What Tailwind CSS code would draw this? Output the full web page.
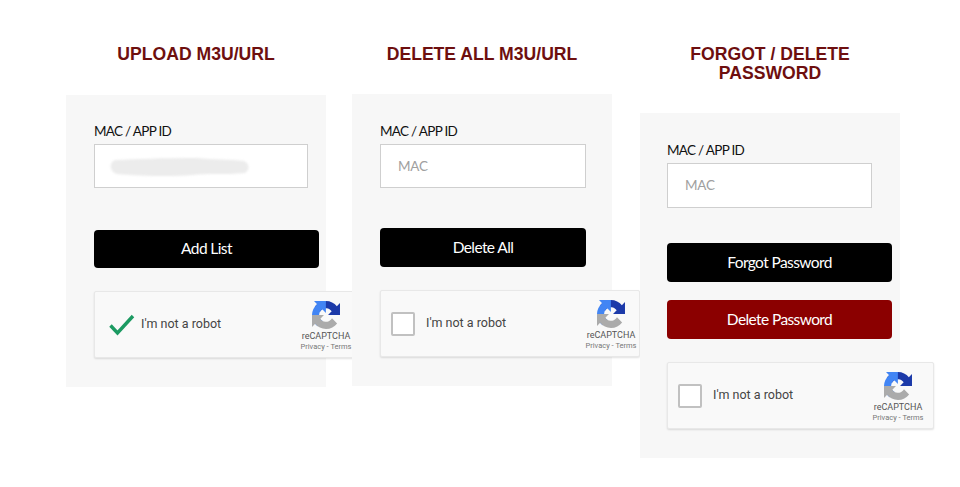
<!DOCTYPE html>
<html lang="en">
<head>
<meta charset="UTF-8">
<script src="https://cdn.jsdelivr.net/npm/@tailwindcss/browser@4"></script>
<title>M3U</title>
</head>
<body class="bg-white overflow-hidden">
<div class="w-[960px] h-[487px] overflow-hidden flex items-start pl-[66px] pt-[45px] font-['Lato',sans-serif]">

  <!-- Upload -->
  <div class="w-[260px] mr-[26px]">
    <h2 class="h-[19px] mb-[31px] text-center text-[17.6px] leading-[19px] font-bold text-[#6e0f0f] font-['Liberation_Sans',sans-serif]">UPLOAD M3U/URL</h2>
    <div class="bg-[#f7f7f7] h-[292px] pl-[28px] pt-[28px]">
      <div class="text-[13.5px] leading-[17px] tracking-[-0.7px] text-[#111] mb-[4px]">MAC / APP ID</div>
      <div class="w-[214px] h-[44px] bg-white border border-[#cfcfcf] flex items-center pl-[12px]">
        <svg class="w-[143px] h-[21px] blur-[1px]" viewBox="0 0 143 21"><path d="M8 4C30 3 55 2 90 2c15 2 35 1 47 3 6 3 6 9 1 12-18 2-40 0-52 2-20 2-55 1-76-1C3 16 1 7 8 4z" fill="#ececec"/></svg>
      </div>
      <button class="block w-[225px] h-[38px] mt-[42px] mb-[23px] bg-black rounded-[4px] text-white text-[15.5px] tracking-[-0.6px] pb-[1px]">Add List</button>
      <div class="w-[266px] h-[67px] bg-[#f9f9f9] border border-[#e8e8e8] rounded-[2px] shadow-[0_1px_2px_rgba(0,0,0,0.12)] flex items-center font-['Roboto',sans-serif]">
        <svg class="ml-[13px] mr-[5px] w-[28px] h-[24px]" viewBox="0 0 28 24"><path d="M2.5 12.5 L9.5 20 L25 3" fill="none" stroke="#1c9a62" stroke-width="3.4"/></svg>
        <span class="text-[12.5px] text-[#444] w-[157px]">I'm not a robot</span>
        <div class="flex flex-col items-center w-[56px] pt-[4px]">
          <svg class="w-[28px] h-[28px]" viewBox="0 0 64 64"><path d="M64 31.955l-.033-1.37V4.687l-7.16 7.16C50.948 4.674 42.033.093 32.05.093c-10.387 0-19.613 4.958-25.48 12.634l11.757 11.88a15.55 15.55 0 0 1 4.762-5.344c2.05-1.6 4.957-2.912 8.96-2.912.484 0 .858.057 1.133.163 4.957.392 9.254 3.128 11.787 7.097l-8.322 8.322c10.54-.04 22.446-.066 27.353.006" fill="#1c3aa9"/><path d="M31.862.094l-1.37.033H4.594l7.16 7.16C4.58 13.147 0 22.06 0 32.046c0 10.387 4.958 19.613 12.634 25.48l11.88-11.757a15.55 15.55 0 0 1-5.344-4.762c-1.6-2.05-2.912-4.957-2.912-8.96 0-.484.057-.858.163-1.133.392-4.957 3.128-9.254 7.097-11.787l8.322 8.322c-.04-10.54-.066-22.446.006-27.353" fill="#4285f4"/><path d="M0 32.045l.033 1.37v25.898l7.16-7.16c5.86 7.173 14.775 11.754 24.76 11.754 10.387 0 19.613-4.958 25.48-12.634l-11.757-11.88a15.55 15.55 0 0 1-4.762 5.344c-2.05 1.6-4.957 2.912-8.96 2.912-.484 0-.858-.057-1.133-.163-4.957-.392-9.254-3.128-11.787-7.097l8.322-8.322c-10.54.04-22.446.066-27.353-.006" fill="#ababab"/></svg>
          <span class="text-[9px] leading-[12px] text-[#555] mt-[1px] whitespace-nowrap">reCAPTCHA</span>
          <span class="text-[7.5px] leading-[10px] text-[#777] whitespace-nowrap">Privacy - Terms</span>
        </div>
      </div>
    </div>
  </div>

  <!-- Delete all -->
  <div class="w-[260px] mr-[28px]">
    <h2 class="h-[19px] mb-[30px] text-center text-[17.6px] leading-[19px] font-bold text-[#6e0f0f] font-['Liberation_Sans',sans-serif]">DELETE ALL M3U/URL</h2>
    <div class="bg-[#f7f7f7] h-[292px] pl-[28px] pt-[29px]">
      <div class="text-[13.5px] leading-[17px] tracking-[-0.7px] text-[#111] mb-[4px]">MAC / APP ID</div>
      <div class="w-[206px] h-[44px] bg-white border border-[#cfcfcf] flex items-center pl-[17px] text-[13.5px] tracking-[-0.2px] text-[#a0a0a0]">MAC</div>
      <button class="block w-[206px] h-[39px] mt-[40px] mb-[23px] bg-black rounded-[4px] text-white text-[15.5px] tracking-[-0.6px]">Delete All</button>
      <div class="w-[260px] h-[67px] bg-[#f9f9f9] border border-[#e8e8e8] rounded-[2px] shadow-[0_1px_2px_rgba(0,0,0,0.12)] flex items-center font-['Roboto',sans-serif]">
        <div class="ml-[10px] mr-[11px] w-[24px] h-[24px] bg-white border-2 border-[#c1c1c1] rounded-[2px]"></div>
        <span class="text-[12.5px] text-[#444] w-[157px]">I'm not a robot</span>
        <div class="flex flex-col items-center w-[56px] pt-[4px]">
          <svg class="w-[28px] h-[28px]" viewBox="0 0 64 64"><path d="M64 31.955l-.033-1.37V4.687l-7.16 7.16C50.948 4.674 42.033.093 32.05.093c-10.387 0-19.613 4.958-25.48 12.634l11.757 11.88a15.55 15.55 0 0 1 4.762-5.344c2.05-1.6 4.957-2.912 8.96-2.912.484 0 .858.057 1.133.163 4.957.392 9.254 3.128 11.787 7.097l-8.322 8.322c10.54-.04 22.446-.066 27.353.006" fill="#1c3aa9"/><path d="M31.862.094l-1.37.033H4.594l7.16 7.16C4.58 13.147 0 22.06 0 32.046c0 10.387 4.958 19.613 12.634 25.48l11.88-11.757a15.55 15.55 0 0 1-5.344-4.762c-1.6-2.05-2.912-4.957-2.912-8.96 0-.484.057-.858.163-1.133.392-4.957 3.128-9.254 7.097-11.787l8.322 8.322c-.04-10.54-.066-22.446.006-27.353" fill="#4285f4"/><path d="M0 32.045l.033 1.37v25.898l7.16-7.16c5.86 7.173 14.775 11.754 24.76 11.754 10.387 0 19.613-4.958 25.48-12.634l-11.757-11.88a15.55 15.55 0 0 1-4.762 5.344c-2.05 1.6-4.957 2.912-8.96 2.912-.484 0-.858-.057-1.133-.163-4.957-.392-9.254-3.128-11.787-7.097l8.322-8.322c-10.54.04-22.446.066-27.353-.006" fill="#ababab"/></svg>
          <span class="text-[9px] leading-[12px] text-[#555] mt-[1px] whitespace-nowrap">reCAPTCHA</span>
          <span class="text-[7.5px] leading-[10px] text-[#777] whitespace-nowrap">Privacy - Terms</span>
        </div>
      </div>
    </div>
  </div>

  <!-- Forgot / delete password -->
  <div class="w-[260px]">
    <h2 class="h-[38px] mb-[30px] text-center text-[17.6px] leading-[19px] font-bold text-[#6e0f0f] font-['Liberation_Sans',sans-serif]">FORGOT / DELETE<br>PASSWORD</h2>
    <div class="bg-[#f7f7f7] h-[345px] pl-[27px] pt-[29px]">
      <div class="text-[13.5px] leading-[17px] tracking-[-0.7px] text-[#111] mb-[4px]">MAC / APP ID</div>
      <div class="w-[205px] h-[45px] bg-white border border-[#cfcfcf] flex items-center pl-[17px] text-[13.5px] tracking-[-0.2px] text-[#a0a0a0]">MAC</div>
      <button class="block w-[225px] h-[39px] mt-[35px] bg-black rounded-[4px] text-white text-[15.5px] tracking-[-0.6px]">Forgot Password</button>
      <button class="block w-[225px] h-[39px] mt-[18px] mb-[23px] bg-[#8b0000] rounded-[4px] text-white text-[15.5px] tracking-[-0.6px]">Delete Password</button>
      <div class="w-[267px] h-[67px] bg-[#f9f9f9] border border-[#e8e8e8] rounded-[2px] shadow-[0_1px_2px_rgba(0,0,0,0.12)] flex items-center font-['Roboto',sans-serif]">
        <div class="ml-[10px] mr-[11px] w-[24px] h-[24px] bg-white border-2 border-[#c1c1c1] rounded-[2px]"></div>
        <span class="text-[12.5px] text-[#444] w-[157px]">I'm not a robot</span>
        <div class="flex flex-col items-center w-[56px] pt-[4px]">
          <svg class="w-[28px] h-[28px]" viewBox="0 0 64 64"><path d="M64 31.955l-.033-1.37V4.687l-7.16 7.16C50.948 4.674 42.033.093 32.05.093c-10.387 0-19.613 4.958-25.48 12.634l11.757 11.88a15.55 15.55 0 0 1 4.762-5.344c2.05-1.6 4.957-2.912 8.96-2.912.484 0 .858.057 1.133.163 4.957.392 9.254 3.128 11.787 7.097l-8.322 8.322c10.54-.04 22.446-.066 27.353.006" fill="#1c3aa9"/><path d="M31.862.094l-1.37.033H4.594l7.16 7.16C4.58 13.147 0 22.06 0 32.046c0 10.387 4.958 19.613 12.634 25.48l11.88-11.757a15.55 15.55 0 0 1-5.344-4.762c-1.6-2.05-2.912-4.957-2.912-8.96 0-.484.057-.858.163-1.133.392-4.957 3.128-9.254 7.097-11.787l8.322 8.322c-.04-10.54-.066-22.446.006-27.353" fill="#4285f4"/><path d="M0 32.045l.033 1.37v25.898l7.16-7.16c5.86 7.173 14.775 11.754 24.76 11.754 10.387 0 19.613-4.958 25.48-12.634l-11.757-11.88a15.55 15.55 0 0 1-4.762 5.344c-2.05 1.6-4.957 2.912-8.96 2.912-.484 0-.858-.057-1.133-.163-4.957-.392-9.254-3.128-11.787-7.097l8.322-8.322c-10.54.04-22.446.066-27.353-.006" fill="#ababab"/></svg>
          <span class="text-[9px] leading-[12px] text-[#555] mt-[1px] whitespace-nowrap">reCAPTCHA</span>
          <span class="text-[7.5px] leading-[10px] text-[#777] whitespace-nowrap">Privacy - Terms</span>
        </div>
      </div>
    </div>
  </div>
</div>
</body>
</html>
